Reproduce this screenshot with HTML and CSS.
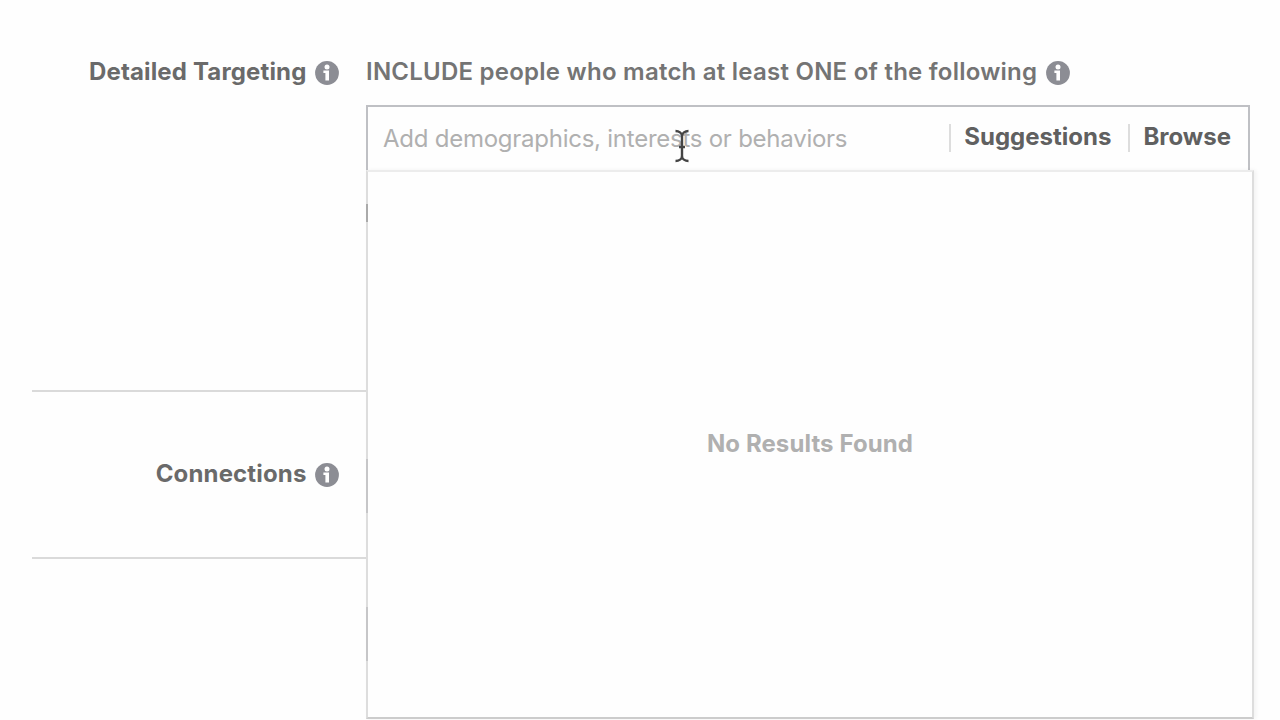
FILE: index.html
```
<!DOCTYPE html>
<html lang="en">
<head>
  <meta charset="UTF-8" />
  <title>Detailed Targeting</title>
  <link rel="stylesheet" href="styles.css">
</head>
<body>
  <svg class="sprite">
    <symbol id="info" viewBox="0 0 24 24">
      <circle cx="12" cy="12" r="11.9" fill="#8c8d94" />
      <circle cx="12" cy="6" r="2.5" fill="#fff" />
      <path d="M8.4 9.6h5.6v9.9h-3.6v-7.4h-2z" fill="#fff" />
    </symbol>
  </svg>

  <main class="form">
    <section class="row targeting">
      <div class="label"><span class="label-text">Detailed Targeting</span><svg class="info"><use href="#info" /></svg></div>
      <div class="field">
        <div class="heading"><span class="heading-text">INCLUDE people who match at least ONE of the following</span><svg class="info"><use href="#info" /></svg></div>
        <div class="search">
          <span class="placeholder">Add demographics, interests or behaviors</span>
          <a class="action suggestions">Suggestions</a>
          <a class="action browse">Browse</a>
          <svg class="cursor" viewBox="0 0 16 34">
            <path d="M1.5 2C5 2 8 4 8 7v20c0 3-3 5-6.5 5M14.5 2C11 2 8 4 8 7M8 27c0 3 3 5 6.5 5M5 18h6" fill="none" stroke="#444" stroke-width="2.4" />
          </svg>
          <div class="results">No Results Found</div>
        </div>
        <div class="edge exclude"></div>
      </div>
    </section>

    <section class="row connections">
      <div class="label"><span class="label-text">Connections</span><svg class="info"><use href="#info" /></svg></div>
      <div class="field"><div class="edge"></div></div>
    </section>

    <section class="row last">
      <div class="label"></div>
      <div class="field"><div class="edge"></div></div>
    </section>
  </main>
</body>
</html>
```
FILE: styles.css
```
* {
  box-sizing: border-box;
}

body {
  margin: 0;
  height: 720px;
  overflow: hidden;
  background: #fefefe;
  color: #6a6a6a;
  font-family: Inter, "Liberation Sans", sans-serif;
  font-size: 24px;
  font-weight: 600;
  line-height: 30px;
  white-space: nowrap;
}

.sprite {
  display: none;
}

.form {
  padding: 57px 30px 0 32px;
}

.row {
  display: grid;
  grid-template-columns: 308px 884px;
  column-gap: 26px;
}

.targeting {
  height: 335px;
  border-bottom: 2px solid #dadada;
}

.connections {
  height: 167px;
  padding-top: 67px;
  border-bottom: 2px solid #dadada;
}

.last {
  padding-top: 48px;
}

.label {
  display: flex;
  justify-content: flex-end;
  align-items: flex-start;
  font-weight: 700;
  letter-spacing: 0.15px;
}

.info {
  flex: none;
  width: 24px;
  height: 24px;
  margin: 3.5px 0 0 8.5px;
}

.label .info {
  margin-right: 1px;
}

.heading {
  display: flex;
  height: 48px;
  color: #747474;
  letter-spacing: 0.24px;
}

.search {
  position: relative;
  display: flex;
  align-items: center;
  height: 65px;
  padding: 0 17px 2px 15px;
  border: 2px solid #bfc0c4;
  border-bottom: 0;
  background: #fefefe;
}

.placeholder {
  flex: 1;
  padding-top: 3px;
  color: #b0b0b0;
  font-weight: 400;
  letter-spacing: -0.25px;
}

.action {
  height: 28px;
  line-height: 26px;
  padding-left: 13px;
  border-left: 2px solid #ddd;
  color: #606060;
  font-weight: 700;
}

.suggestions {
  margin-right: 17px;
}

.cursor {
  position: absolute;
  left: 306px;
  top: 22px;
  width: 16px;
  height: 34px;
}

/* menu opens over the rows below */
.results {
  position: absolute;
  left: -2px;
  top: 63px;
  width: 888px;
  height: 549px;
  padding-top: 257px;
  border: 2px solid #ddd;
  border-top-color: #ececec;
  border-bottom-color: #ccc;
  box-shadow: 2px 0 4px rgba(0, 0, 0, 0.05);
  background: #fefefe;
  color: #b0b0b0;
  font-weight: 700;
  letter-spacing: 0.1px;
  text-align: center;
}

/* left borders of the covered inputs */
.edge {
  position: relative;
  z-index: 1;
  width: 2px;
  height: 54px;
  background: #c6c6c8;
}

.exclude {
  height: 18px;
  margin-top: 34px;
  background: #aaa;
}
```
